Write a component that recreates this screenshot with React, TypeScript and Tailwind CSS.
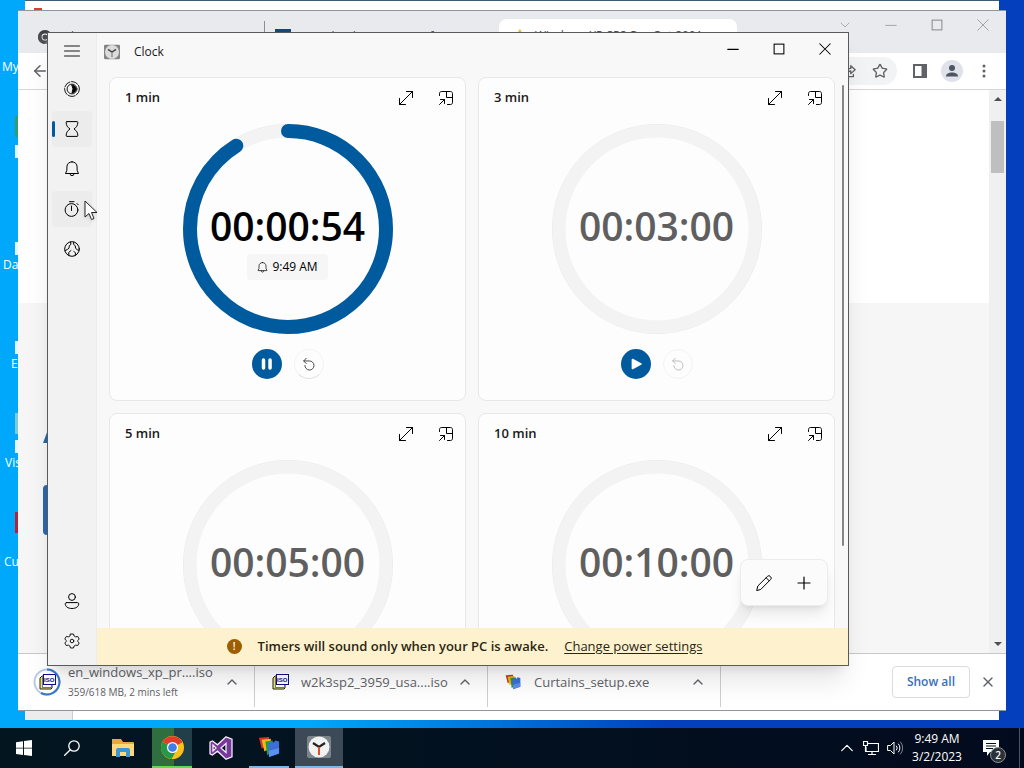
import type { ReactNode } from "react";
import clsx from "clsx";
import { ArrowLeft, ChevronDown, ChevronUp, Plus, Star, X } from "lucide-react";

type Timer = {
  name: string;
  time: string;
  progress?: number;
  endsAt?: string;
};

const timers: Timer[] = [
  { name: "1 min", time: "00:00:54", progress: 0.91, endsAt: "9:49 AM" },
  { name: "3 min", time: "00:03:00" },
  { name: "5 min", time: "00:05:00" },
  { name: "10 min", time: "00:10:00" },
];

const desktopShortcuts = [
  { name: "My PC", color: "", arrow: false, indent: "pl-[2px]" },
  { name: "", color: "bg-[#2f9e6a]", arrow: true, indent: "" },
  { name: "Dayz", color: "", arrow: true, indent: "pl-[3px]" },
  { name: "Epic", color: "", arrow: true, indent: "pl-[11px]" },
  { name: "Visual", color: "bg-[#7fc9d8]", arrow: true, indent: "pl-[5px]" },
  { name: "Curtains", color: "bg-[#b3243a]", arrow: false, indent: "pl-[4px]" },
];

function Icon({
  size = 16,
  className,
  children,
}: {
  size?: number;
  className?: string;
  children: ReactNode;
}) {
  return (
    <svg
      width={size}
      height={size}
      viewBox="0 0 16 16"
      fill="none"
      stroke="currentColor"
      strokeLinecap="round"
      strokeLinejoin="round"
      className={clsx("shrink-0", className)}
      aria-hidden="true"
    >
      {children}
    </svg>
  );
}

const BellIcon = ({ size = 16 }: { size?: number }) => (
  <Icon size={size}>
    <path d="M8 .8C5 .8 2.9 3 2.9 5.900v3.300L1.500 12.500h13L13.100 9.200V5.900C13.100 3 11 .8 8 .8z" />
    <path d="M6 12.700a2 2 0 0 0 4 0" />
  </Icon>
);

const FocusIcon = () => (
  <Icon>
    <circle cx="8" cy="8" r="7.400" strokeDasharray="7 1.500" strokeWidth=".9" />
    <circle cx="8" cy="8" r="4.900" strokeWidth=".9" />
    <path d="M8 4.200a3.800 3.800 0 0 1 0 7.600 8 8 0 0 0 0-7.600z" fill="currentColor" />
  </Icon>
);

const HourglassIcon = () => (
  <Icon>
    <path d="M3 .6h10c.6 0 .8.300.800.800C13.800 4.600 12.500 6.200 10 8c2.500 1.800 3.800 3.400 3.800 6.600 0 .500-.2.800-.8.800H3c-.6 0-.8-.3-.8-.8C2.200 11.400 3.500 9.800 6 8 3.500 6.200 2.200 4.600 2.200 1.400c0-.5.2-.8.8-.8z" />
  </Icon>
);

const StopwatchIcon = () => (
  <Icon>
    <circle cx="7.500" cy="9" r="6.400" />
    <path d="M5.500.7h4.500M7.500 5v4.500M13 2.500l1.300 1.300" />
  </Icon>
);

const WorldIcon = () => (
  <Icon>
    <circle cx="8" cy="8" r="7.300" />
    <path
      d="M6.500 1l.5 2.300-1.700 1.400L5 7.200 3.300 8.500 1 9.700M9.800 1.200L9.500 3.300l1.800 1.500.2 2.400 1.800 1.500L15 9.500M5 14.500l-.3-3L7 9.500M11 14.600l.7-2.600-1.900-1.500"
    />
  </Icon>
);

const AccountIcon = () => (
  <Icon>
    <circle cx="8" cy="4" r="3.400" />
    <path d="M2.500 9.600h11c.8 0 1.200.500 1.200 1.200 0 2.800-2.600 4.700-6.700 4.700s-6.700-1.900-6.700-4.700c0-.7.4-1.200 1.200-1.200z" />
  </Icon>
);

const SettingsIcon = () => (
  <Icon>
    <circle cx="8" cy="8" r="1.800" strokeWidth=".9" />
    <path
      d="M6.500 1l3 0 .6 2 1.600.9 2-.5 1.500 2.600L13.800 7.500v1l1.400 1.500-1.500 2.600-2-.5-1.600.9-.6 2h-3l-.6-2-1.600-.9-2 .5L.8 10l1.400-1.500v-1L.8 6l1.500-2.600 2 .5L5.900 3z"
      strokeWidth=".9"
    />
  </Icon>
);

const ExpandIcon = () => (
  <Icon>
    <path d="M1.500 14.500l13-13M8.500 1.500h6v6M1.500 8.500v6h6" />
  </Icon>
);

const PinTopIcon = () => (
  <Icon>
    <path d="M1.500 5.500V3.500c0-1.200.800-2 2-2h9c1.200 0 2 .8 2 2v9c0 1.200-.8 2-2 2H9.500M8.500 1.500v6h6M1.500 14.500l5-5M2.500 9.500h4v4" />
  </Icon>
);

const ResetIcon = () => (
  <Icon size={14}>
    <path d="M2 4.500h6.500a5.200 5.200 0 1 1-5.200 5.200M4.800 1.500L2 4.500l2.800 3" />
  </Icon>
);

const EditIcon = () => (
  <Icon>
    <path d="M.8 15.200l1-4.200L11.500 1.400a1.900 1.900 0 0 1 2.800 0l.3.3a1.900 1.900 0 0 1 0 2.800L5 14.200zM10.200 2.800l3 3" />
  </Icon>
);

const SquareIcon = () => (
  <Icon size={12}>
    <rect x="1.500" y="1.500" width="13" height="13" strokeWidth="1.400" strokeLinejoin="miter" />
  </Icon>
);

function ClockLogo({ size = 16, muted = false }: { size?: number; muted?: boolean }) {
  return (
    <svg width={size} height={size} viewBox="0 0 24 24" className="shrink-0" aria-hidden="true">
      <rect x="0" y="1" width="24" height="22" rx="2" fill={muted ? "#858585" : "#7c858b"} />
      <circle cx="12" cy="12" r="10.500" fill={muted ? "#dcdcdc" : "#f1f1f1"} />
      <path d="M6 8l6 4 6-4" stroke={muted ? "#444" : "#222"} strokeWidth="2.200" fill="none" />
      <path d="M12 12v8" stroke={muted ? "#888" : "#d9512c"} strokeWidth="2" />
    </svg>
  );
}

function ChromeLogo({ size = 24, grey = false }: { size?: number; grey?: boolean }) {
  return (
    <svg width={size} height={size} viewBox="0 0 24 24" className="shrink-0" aria-hidden="true">
      <circle cx="12" cy="12" r="12" fill={grey ? "#6a6d71" : "#fbc116"} />
      <path d="M12 12L1.600 6A12 12 0 0 1 22.400 6.500z" fill={grey ? "#3c4043" : "#e33b2e"} />
      <path d="M1.600 6A12 12 0 0 0 11 24l5-9-4-3z" fill={grey ? "#4a4d51" : "#279847"} />
      <circle cx="12" cy="12" r="5.800" fill="#fff" />
      <circle cx="12" cy="12" r="4.500" fill={grey ? "#4a4d51" : "#3f7fe8"} />
    </svg>
  );
}

function CurtainsLogo({ size = 16 }: { size?: number }) {
  return (
    <svg width={size} height={size} viewBox="0 0 24 24" className="shrink-0" aria-hidden="true">
      <path d="M1 2l11-1v8l-8 5z" fill="#d93425" />
      <path d="M4 4l10-1v10l-7 4z" fill="#f2b91d" />
      <path d="M8 6l8-1v12l-6 4z" fill="#27984a" />
      <path d="M11 8l4-2 2 1 2-2 4 1v13l-11 4z" fill="#3b6fd8" />
      <path d="M12 16l11-3v6l-11 4z" fill="#5d8ff0" />
    </svg>
  );
}

function IsoIcon() {
  return (
    <svg width="18" height="16" viewBox="0 0 18 16" className="shrink-0" aria-hidden="true">
      <path d="M2 4l2-2h10v12l-1 1H2z" fill="#e9ef5b" stroke="#222" strokeWidth="1" />
      <rect x="4.500" y="3.500" width="9" height="10" fill="#fff" stroke="#777" />
      <rect x="5.500" y=".5" width="12" height="10" fill="#fff" stroke="#10108a" />
      <text x="6" y="8" fontSize="6" fontWeight="700" fontFamily="Liberation Sans, sans-serif" fill="#10108a">
        ISO
      </text>
    </svg>
  );
}

function NavButton({
  label,
  selected,
  hovered,
  children,
}: {
  label: string;
  selected?: boolean;
  hovered?: boolean;
  children: ReactNode;
}) {
  return (
    <button
      aria-label={label}
      className={clsx(
        "relative flex h-9 w-10 items-center justify-center rounded",
        (selected || hovered) && "bg-[#ececec]",
      )}
    >
      {selected && <span className="absolute left-0 h-4 w-[3px] rounded-full bg-[#005a9e]" />}
      {children}
    </button>
  );
}

function TimerRing({ progress }: { progress?: number }) {
  const length = 2 * Math.PI * 98;
  return (
    <svg width="210" height="210" viewBox="0 0 210 210" fill="none" className="absolute inset-0" aria-hidden="true">
      <circle cx="105" cy="105" r="104.500" stroke="#e9e9e9" />
      <circle cx="105" cy="105" r="98" stroke="#f3f3f3" strokeWidth="13" />
      {progress && (
        <circle
          cx="105"
          cy="105"
          r="98"
          stroke="#005a9e"
          strokeWidth="14"
          strokeLinecap="round"
          strokeDasharray={`${length * progress} ${length}`}
          transform="rotate(-90 105 105)"
        />
      )}
    </svg>
  );
}

function TimerCard({ timer }: { timer: Timer }) {
  const running = timer.progress !== undefined;
  return (
    <article className="flex h-[324px] flex-col items-center rounded-lg border border-[#e8e8e8] bg-[#fdfdfd]">
      <div className="flex h-10 w-full items-center pr-[11px] pl-[15px]">
        <h2 className="flex-1 text-[13px] font-semibold text-[#1a1a1a]">{timer.name}</h2>
        <div className="flex gap-6">
          <button aria-label={`Expand ${timer.name}`}>
            <ExpandIcon />
          </button>
          <button aria-label={`Keep ${timer.name} on top`}>
            <PinTopIcon />
          </button>
        </div>
      </div>
      <div className="relative mt-[6px] flex size-[210px] shrink-0 flex-col items-center pt-[78px]">
        <TimerRing progress={timer.progress} />
        <p
          className={clsx(
            "relative text-[39px] leading-[48px] font-semibold",
            running ? "text-black" : "text-[#5f5f5f]",
          )}
        >
          {timer.time}
        </p>
        {timer.endsAt && (
          <p className="relative mt-1 flex h-[26px] items-center gap-1 rounded bg-[#f6f6f6] px-[10px] text-xs text-black">
            <BellIcon size={11} />
            {timer.endsAt}
          </p>
        )}
      </div>
      <div className="mt-[15px] flex gap-3">
        <button
          aria-label={running ? "Pause" : "Start"}
          className="flex size-[30px] items-center justify-center rounded-full bg-[#005a9e] text-white"
        >
          <Icon size={14}>
            {running ? (
              <path d="M4 3.500v9M11.500 3.500v9" strokeWidth="4" />
            ) : (
              <path d="M4 3l9.500 5L4 13z" fill="currentColor" strokeWidth="2" />
            )}
          </Icon>
        </button>
        <button
          aria-label="Reset"
          disabled={!running}
          className={clsx(
            "flex size-[30px] items-center justify-center rounded-full border border-[#f3f3f3]",
            running ? "border-b-[#ddd] text-[#333]" : "text-[#b5b5b5]",
          )}
        >
          <ResetIcon />
        </button>
      </div>
    </article>
  );
}

function ClockWindow() {
  return (
    <section className="absolute top-8 right-[175px] bottom-[62px] left-[47px] flex overflow-hidden border border-[#5a5a5a] bg-[#f8f8f8] shadow-xl">
      <nav className="flex w-[49px] shrink-0 flex-col items-center gap-1 border-r border-[#ececec] bg-[#f2f2f2] pb-[6px]">
        <button aria-label="Menu" className="flex h-[34px] w-10 items-center justify-center">
          <Icon>
            <path d="M.5 4h15M.5 9h15M.5 14h15" strokeWidth=".9" />
          </Icon>
        </button>
        <NavButton label="Focus sessions">
          <FocusIcon />
        </NavButton>
        <NavButton label="Timer" selected>
          <HourglassIcon />
        </NavButton>
        <NavButton label="Alarm">
          <BellIcon />
        </NavButton>
        <NavButton label="Stopwatch" hovered>
          <StopwatchIcon />
        </NavButton>
        <NavButton label="World clock">
          <WorldIcon />
        </NavButton>
        <div className="flex-1" />
        <NavButton label="Sign in">
          <AccountIcon />
        </NavButton>
        <NavButton label="Settings">
          <SettingsIcon />
        </NavButton>
      </nav>

      <div className="relative flex min-w-0 flex-1 flex-col">
        <header className="flex h-[38px] shrink-0 items-center pl-[7px]">
          <ClockLogo muted />
          <h1 className="ml-[14px] flex-1 text-xs text-[#1a1a1a]">Clock</h1>
          <div className="flex h-8 items-center self-start text-black">
            <button aria-label="Minimize" className="flex w-[46px] justify-center">
              <Icon size={12}>
                <path d="M1 8.500h14" strokeWidth="1.400" />
              </Icon>
            </button>
            <button aria-label="Maximize" className="flex w-[46px] justify-center">
              <SquareIcon />
            </button>
            <button aria-label="Close" className="flex w-[46px] justify-center">
              <Icon size={12}>
                <path d="M1 1l14 14M15 1L1 15" strokeWidth="1.400" />
              </Icon>
            </button>
          </div>
        </header>

        <div className="mt-[6px] flex min-h-0 flex-1 overflow-hidden">
          <div className="grid min-w-0 flex-1 auto-rows-min grid-cols-2 gap-3 pr-[7px] pl-3">
            {timers.map((timer) => (
              <TimerCard key={timer.name} timer={timer} />
            ))}
          </div>
          <div className="mt-2 mr-1 h-[461px] w-0.5 shrink-0 rounded bg-[#858585]" />
        </div>

        <div className="absolute right-5 bottom-[59px] flex h-[47px] items-center gap-6 rounded-lg border border-[#ececec] bg-[#fbfbfb] px-[15px] shadow-lg">
          <button aria-label="Edit timers">
            <EditIcon />
          </button>
          <button aria-label="Add new timer">
            <Icon>
              <path d="M8 2v12M2 8h12" strokeWidth="1.200" />
            </Icon>
          </button>
        </div>

        <div className="flex h-[37px] shrink-0 items-center justify-center bg-[#fdf2cd] pr-4 text-[13px] text-[#2b2613]">
          <span className="flex size-[15px] items-center justify-center rounded-full bg-[#9d5d00] text-[10px] font-semibold text-white">
            !
          </span>
          <p className="mr-4 ml-4 font-semibold">Timers will sound only when your PC is awake.</p>
          <a href="#power" className="underline underline-offset-2">
            Change power settings
          </a>
        </div>
      </div>
    </section>
  );
}

function DownloadItem({
  icon,
  name,
  detail,
}: {
  icon: ReactNode;
  name: string;
  detail?: string;
}) {
  return (
    <li className="flex h-[50px] w-[233px] items-center border-r border-[#cfcfcf] pr-[14px] pl-4 text-[#5f6368]">
      <span className="flex w-[18px] justify-center">{icon}</span>
      <div className="ml-3 min-w-0 flex-1">
        <p className="truncate text-[13px] leading-5">{name}</p>
        {detail && <p className="truncate text-[10px] leading-5">{detail}</p>}
      </div>
      <button aria-label={`Options for ${name}`}>
        <ChevronUp size={16} />
      </button>
    </li>
  );
}

function BrowserWindow() {
  return (
    <section className="absolute top-[10px] right-[18px] bottom-[17px] left-[18px] flex flex-col border-y border-[#8f979d] bg-white">
      <div className="flex h-[42px] shrink-0 bg-[#e8eaed] text-xs text-[#4a4d51]">
        <div className="flex h-8 w-[247px] items-center gap-2 self-end border-r border-[#8b8f94] pl-5">
          <ChromeLogo size={14} grey />
          <span>What's New</span>
        </div>
        <div className="flex h-8 w-[234px] items-center gap-2 self-end pl-[10px]">
          <span className="size-4 bg-[#17467a]" />
          <span>Downloading Service Info</span>
        </div>
        <div className="flex h-[34px] w-[238px] items-center gap-2 self-end rounded-t-lg bg-white pl-[14px]">
          <Icon size={14} className="text-[#e5b31b]">
            <path d="M8 1l7 13H1z" fill="currentColor" />
          </Icon>
          <span>Windows XP SP3 Pro Oct 2001</span>
        </div>
        <Plus size={14} className="mb-[9px] ml-4 self-end" />
        <div className="flex-1" />
        <div className="flex h-7 items-center text-[#8a8d91]">
          <button aria-label="Search tabs" className="flex w-[46px] justify-center">
            <ChevronDown size={16} strokeWidth={1} />
          </button>
          <button aria-label="Minimize browser" className="flex w-[46px] justify-center">
            <Icon size={12}>
              <path d="M1 8.500h14" />
            </Icon>
          </button>
          <button aria-label="Maximize browser" className="flex w-[46px] justify-center">
            <SquareIcon />
          </button>
          <button aria-label="Close browser" className="flex w-[46px] justify-center">
            <Icon size={12}>
              <path d="M1 1l14 14M15 1L1 15" />
            </Icon>
          </button>
        </div>
      </div>

      <div className="flex h-[37px] shrink-0 items-center border-b border-[#d5d7da] pr-[14px] pl-[13px] text-[#5f6368]">
        <button aria-label="Back">
          <ArrowLeft size={18} />
        </button>
        <div className="mr-4 ml-20 flex h-7 flex-1 items-center justify-end gap-4 rounded-full bg-[#f1f3f4] pr-[9px]">
          <Icon size={14}>
            <path d="M2 7v7.500h11V12M5 10c0-3.500 2-5 5-5V2l5 4.500L10 11V8c-2 0-3.500.5-5 2z" strokeWidth="1.500" />
          </Icon>
          <Star size={16} />
        </div>
        <svg width="14" height="14" viewBox="0 0 14 14" className="shrink-0" aria-hidden="true">
          <path d="M1 1h12v12H1z" fill="none" stroke="#5f6368" strokeWidth="2" />
          <path d="M8.500 1H13v12H8.500z" fill="#5f6368" />
        </svg>
        <button aria-label="Profile" className="ml-[14px] rounded-full bg-[#dfe2ea]">
          <svg width="22" height="22" viewBox="0 0 22 22" aria-hidden="true">
            <circle cx="11" cy="8" r="3" fill="#4f5563" />
            <path d="M5 16.500c0-3 3-4 6-4s6 1 6 4z" fill="#4f5563" />
          </svg>
        </button>
        <button aria-label="Browser menu" className="ml-[13px]">
          <svg width="16" height="16" viewBox="0 0 16 16" fill="#5f6368" aria-hidden="true">
            <circle cx="8" cy="3" r="1.500" />
            <circle cx="8" cy="8" r="1.500" />
            <circle cx="8" cy="13" r="1.500" />
          </svg>
        </button>
      </div>

      <div className="flex min-h-0 flex-1">
        <div className="flex flex-1 flex-col">
          <div className="h-[213px] bg-white" />
          <div className="flex-1 bg-[#f6f6f6] pt-[124px] pl-[25px]">
            <svg width="20" height="16" viewBox="0 0 20 16" aria-hidden="true">
              <path d="M0 16L6 0h8l6 16z" fill="#1d6bb0" />
            </svg>
            <div className="mt-[42px] h-[50px] w-40 rounded bg-[#2a68b0]" />
          </div>
        </div>
        <div className="flex w-[17px] flex-col items-center justify-between bg-[#f0f0f0] py-[5px] text-[#505050]">
          <svg width="8" height="8" viewBox="0 0 8 8" aria-hidden="true">
            <path d="M0 6l4-4 4 4z" fill="currentColor" />
          </svg>
          <div className="mt-[18px] mb-auto h-[52px] w-[13px] bg-[#bfbfbf]" />
          <svg width="8" height="8" viewBox="0 0 8 8" aria-hidden="true">
            <path d="M0 2l4 4 4-4z" fill="currentColor" />
          </svg>
        </div>
      </div>

      <footer className="flex h-[57px] shrink-0 items-center border-t border-[#c8c8c8] pr-[10px]">
        <ul className="flex flex-1 pl-1">
          <DownloadItem
            name="en_windows_xp_pr....iso"
            detail="359/618 MB, 2 mins left"
            icon={
              <span className="relative flex size-7 shrink-0 items-center justify-center">
                <svg width="28" height="28" viewBox="0 0 28 28" fill="none" className="absolute inset-0" aria-hidden="true">
                  <circle cx="14" cy="14" r="12.500" stroke="#b9cbe6" strokeWidth="2" />
                  <path d="M14 1.500A12.500 12.500 0 1 1 8 25" stroke="#3b78c9" strokeWidth="2" />
                </svg>
                <IsoIcon />
              </span>
            }
          />
          <DownloadItem name="w2k3sp2_3959_usa....iso" icon={<IsoIcon />} />
          <DownloadItem name="Curtains_setup.exe" icon={<CurtainsLogo />} />
        </ul>
        <button className="h-8 rounded border border-[#dadce0] px-[14px] text-xs font-semibold text-[#3a6fb8]">
          Show all
        </button>
        <button aria-label="Close downloads" className="ml-[10px] text-[#5f6368]">
          <X size={16} />
        </button>
      </footer>
    </section>
  );
}

function Taskbar() {
  return (
    <footer className="z-10 flex h-10 shrink-0 items-stretch bg-linear-to-r from-[#031620] to-[#020b1e] text-white">
      <button aria-label="Start" className="flex w-12 items-center justify-center">
        <svg width="16" height="16" viewBox="0 0 16 16" fill="#fff" aria-hidden="true">
          <path d="M0 2.300l7-1v6.400H0zM8 1.100L16 0v7.700H8zM0 8.600h7v6.300l-7-1zM8 8.600h8V16l-8-1.100z" />
        </svg>
      </button>
      <button aria-label="Search" className="flex w-12 items-center justify-center">
        <Icon>
          <circle cx="10" cy="6" r="5.200" strokeWidth="1.300" />
          <path d="M6.300 9.700L.7 15.300" strokeWidth="1.300" />
        </Icon>
      </button>
      <button aria-label="File Explorer" className="flex w-[54px] items-center justify-center">
        <svg width="22" height="20" viewBox="0 0 22 20" aria-hidden="true">
          <path d="M0 1h9l2 3h10a1 1 0 0 1 1 1v13H0z" fill="#e9a93a" />
          <path d="M0 6h22v12H0z" fill="#ffd978" />
          <path d="M4 19v-7a2 2 0 0 1 2-2h10a2 2 0 0 1 2 2v7h-4v-5H8v5z" fill="#3b96d2" />
        </svg>
      </button>
      <button
        aria-label="Chrome"
        className="ml-0.5 flex w-10 items-center justify-center border-b-2 border-[#5fdc4b] bg-linear-to-r from-[#2f6e3f] from-55% to-[#203f48] to-55%"
      >
        <ChromeLogo size={23} />
      </button>
      <button aria-label="Visual Studio" className="flex w-[57px] items-center justify-center">
        <svg width="24" height="24" viewBox="0 0 24 24" aria-hidden="true">
          <path
            d="M17 .8l6 2.400v17.600l-6 2.400-8.500-8L3.500 19 1 17.800V6.200L3.500 5l5 3.800zM17 7.500L12 12l5 4.500zM4 9v6l3-3z"
            fill="#76389b"
            fillRule="evenodd"
            stroke="#f4eaf9"
            strokeWidth="1.300"
          />
        </svg>
      </button>
      <button
        aria-label="Curtains"
        className="flex w-10 items-center justify-center border-b-2 border-[#76b9ed]"
      >
        <CurtainsLogo size={22} />
      </button>
      <button
        aria-label="Clock"
        className="ml-[6px] flex w-12 items-center justify-center border-b-2 border-[#76b9ed] bg-[#3b4a56]"
      >
        <ClockLogo size={24} />
      </button>
      <div className="flex-1" />
      <button aria-label="Show hidden icons" className="flex w-6 items-center justify-center">
        <Icon size={12}>
          <path d="M1 11.500l7-7 7 7" strokeWidth="1.600" />
        </Icon>
      </button>
      <button aria-label="Network" className="flex w-6 items-center justify-center">
        <Icon>
          <path d="M5 3.500h10.500v8H3V7M9 11.500v3M5.500 14.500h7M.5 1.500h4v4h-4zM2.500 5.500v6" strokeWidth="1.200" />
        </Icon>
      </button>
      <button aria-label="Volume" className="flex w-6 items-center justify-center">
        <Icon>
          <path d="M1 5.500h2.500L7 2v12L3.500 10.500H1zM9.500 6a3 3 0 0 1 0 4M11.500 4a6 6 0 0 1 0 8" />
          <path d="M13.500 2a9 9 0 0 1 0 12" opacity=".5" />
        </Icon>
      </button>
      <time className="mr-1 ml-0.5 flex w-14 flex-col items-center justify-center text-xs leading-[18px] whitespace-nowrap">
        <span>9:49 AM</span>
        <span>3/2/2023</span>
      </time>
      <button aria-label="Notifications" className="relative mr-[6px] flex w-11 items-center justify-center">
        <svg width="16" height="16" viewBox="0 0 16 16" aria-hidden="true">
          <path d="M0 0h16v12H7l-3 4v-4H0z" fill="#fff" />
          <path d="M3 3.500h10M3 6h10M3 8.500h7" stroke="#03121f" />
        </svg>
        <span className="absolute right-[7px] bottom-[5px] flex size-4 items-center justify-center rounded-full border border-[#8a8f94] bg-[#2b3138] text-[10px] font-semibold">
          2
        </span>
      </button>
      <span className="mr-1 w-px bg-[#4b5560]" />
    </footer>
  );
}

export default function App() {
  return (
    <div className="flex h-screen flex-col overflow-hidden font-['Open_Sans','Noto_Sans',sans-serif]">
      <main className="relative min-h-0 flex-1 overflow-hidden bg-linear-to-r from-[#00a8fb] from-30% to-[#0440bd] to-65%">
        <ul className="flex flex-col pt-[17px] text-xs text-white">
          {desktopShortcuts.map((item, i) => (
            <li key={i} className="flex h-[99px] w-[76px] flex-col justify-end pb-10">
              <div className="mb-px ml-[15px] flex h-12 w-8 flex-col justify-between">
                <span className={clsx("h-[21px]", item.color)} />
                <span className={clsx("size-[13px]", item.arrow && "bg-white/90")} />
              </div>
              <span className={clsx("h-[18px] leading-[18px]", item.indent)}>{item.name}</span>
            </li>
          ))}
        </ul>
        <div className="absolute top-0 right-[25px] bottom-2 left-[25px] flex flex-col justify-between border-t border-[#3f5b78] bg-white">
          <span className="mt-[7px] ml-[9px] h-1 w-2 bg-[#e23b2e]" />
          <span className="h-[9px] w-12 border-r border-[#ccc] bg-[#ececec]" />
        </div>
        <BrowserWindow />
        <ClockWindow />
        <svg width="14" height="22" viewBox="0 0 14 22" className="absolute top-[200px] left-[84px] drop-shadow" aria-hidden="true">
          <path d="M1 1v16l4-3.500 2.500 6 2.500-1-2.500-6H13z" fill="#fff" stroke="#222" />
        </svg>
      </main>
      <Taskbar />
    </div>
  );
}
